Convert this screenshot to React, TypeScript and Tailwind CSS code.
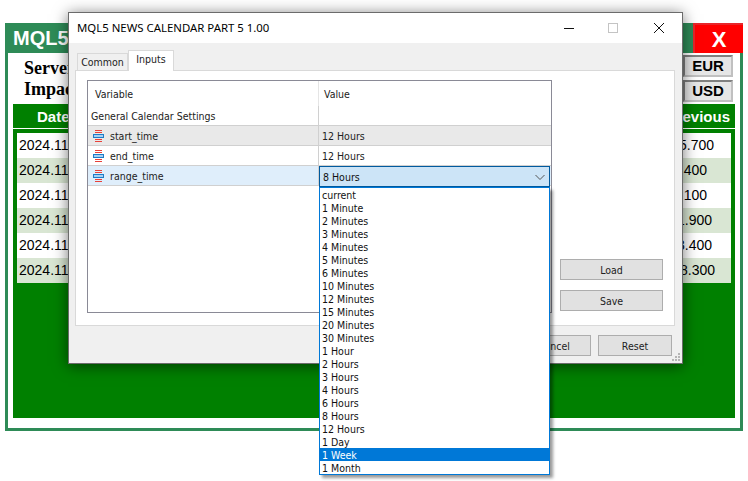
const dialogFont = { fontFamily: '"DejaVu Sans Condensed", "Noto Sans", sans-serif' }

const rows = [
  { value: '5.700', shade: false, inset: 'pr-[17px]' },
  { value: '400', shade: true, inset: 'pr-[24px]' },
  { value: '100', shade: false, inset: 'pr-[24px]' },
  { value: '1.900', shade: true, inset: 'pr-[19px]' },
  { value: '3.400', shade: false, inset: 'pr-[19px]' },
  { value: '8.300', shade: true, inset: 'pr-[16px]' },
]

const ranges = [
  'current', '1 Minute', '2 Minutes', '3 Minutes', '4 Minutes', '5 Minutes', '6 Minutes',
  '10 Minutes', '12 Minutes', '15 Minutes', '20 Minutes', '30 Minutes', '1 Hour', '2 Hours',
  '3 Hours', '4 Hours', '6 Hours', '8 Hours', '12 Hours', '1 Day', '1 Week', '1 Month',
]

function InputIcon() {
  return (
    <svg width="11" height="12" viewBox="0 0 11 12" className="shrink-0">
      <rect x="2" y="0" width="7" height="1" fill="#e8413a" />
      <rect x="2" y="2" width="7" height="1" fill="#e8413a" />
      <rect x="0" y="4" width="11" height="4" fill="#1c7cc8" />
      <rect x="1" y="5" width="9" height="2" fill="#a8d0f0" />
      <rect x="2" y="9" width="7" height="1" fill="#e8413a" />
      <rect x="2" y="11" width="7" height="1" fill="#e8413a" />
    </svg>
  )
}

function Bevel({ label }: { label: string }) {
  return (
    <div className="w-[50px] h-[22px] flex items-center justify-center bg-[#e6e6e6] border-2 border-t-[#808080] border-l-[#808080] border-r-[#c0c0c0] border-b-[#c0c0c0] text-[15px] font-bold text-black">
      {label}
    </div>
  )
}

function Btn({ label, className }: { label: string; className: string }) {
  return (
    <div className={`h-[21px] flex items-center justify-center pt-[2px] bg-[#e1e1e1] border border-[#adadad] text-[10.5px] text-[#222] ${className}`}>
      {label}
    </div>
  )
}

function ParamRow({ name, value, className }: { name: string; value: string; className: string }) {
  return (
    <div className={`flex h-[20px] border-b border-[#d0d0d0] ${className}`}>
      <div className="w-[231px] flex items-center gap-[6px] pl-[5px] border-r border-[#d0d0d0]">
        <InputIcon />
        <span className="pt-[2px]">{name}</span>
      </div>
      <div className="pl-[3px] pt-[2px] flex items-center">{value}</div>
    </div>
  )
}

export default function App() {
  return (
    <div className="relative w-[748px] h-[481px] overflow-hidden bg-white pt-[23px] pl-[5px]" style={{ fontFamily: '"Liberation Sans", Arial, sans-serif' }}>
      <div className="w-[738px] h-[408px] border-[3px] border-t-0 border-[#2e8b57] flex flex-col">
        <div className="h-[30px] -mx-[3px] bg-[#2e8b57] flex items-center justify-between shrink-0">
          <span className="pl-[8px] text-[20px] font-bold text-white">MQL5</span>
          <div className="w-[50px] h-[30px] bg-[#ff0000] border-l-2 border-t-2 border-[#e8262a] flex items-center justify-center text-[22px] font-bold text-white">X</div>
        </div>
        <div className="flex-1 flex flex-col px-[5px] pb-[10px]">
          <div className="h-[51px] flex justify-between pt-[2px] pr-[2px] shrink-0">
            <div className="pl-[11px] pt-[3px] text-[18px] font-bold text-black leading-[21px]" style={{ fontFamily: '"Liberation Serif", serif' }}>
              <div>Server</div>
              <div>Impact</div>
            </div>
            <div className="flex flex-col gap-[3px]">
              <Bevel label="EUR" />
              <Bevel label="USD" />
            </div>
          </div>
          <div className="flex-1 bg-[#008000]">
            <div className="h-[25px] flex justify-between items-center pl-[24px] pr-[5px] pt-[2px] border-b border-white text-[15px] font-bold text-white">
              <span>Date</span>
              <span>Previous</span>
            </div>
            <div className="mx-[4px] mt-[4px] bg-white">
              {rows.map((r, i) => (
                <div key={i} className={`h-[25px] flex items-center justify-between pl-[2px] text-[14px] text-black ${r.inset} ${r.shade ? 'bg-[#d9e6d3]' : 'bg-white'}`}>
                  <span>2024.11</span>
                  <span>{r.value}</span>
                </div>
              ))}
            </div>
          </div>
        </div>
      </div>

      {/* settings dialog */}
      <div className="absolute left-[68px] top-[12px] w-[615px] h-[352px] bg-[#f0f0f0] border border-[#6b6b6b] shadow-[0_2px_14px_rgba(0,0,0,0.55)] flex flex-col text-[10.5px] text-[#222]" style={dialogFont}>
        <div className="h-[30px] bg-white flex items-center pl-[8px] shrink-0">
          <span className="flex-1 text-[11.4px] text-black" style={{ fontFamily: '"Noto Sans", sans-serif' }}>MQL5 NEWS CALENDAR PART 5 1.00</span>
          <svg width="12" height="12" viewBox="0 0 12 12" className="mr-[33px]"><path d="M1 6.5h10" stroke="#111" /></svg>
          <div className="w-[10px] h-[10px] border border-[#c4c4c4] mr-[35px]" />
          <svg width="12" height="12" viewBox="0 0 12 12" className="mr-[17px]"><path d="M1 1l10 10M11 1L1 11" stroke="#111" /></svg>
        </div>

        <div className="flex-1 flex flex-col px-[6px] relative">
          <div className="flex items-end h-[27px] pl-[2px] shrink-0">
            <div className="w-[51px] h-[17px] pt-px bg-[#f0f0f0] border border-b-0 border-[#d9d9d9] flex items-center justify-center">Common</div>
            <div className="w-[46px] h-[21px] -mb-px relative bg-white border border-b-0 border-[#d9d9d9] flex items-center justify-center pb-[2px]">Inputs</div>
          </div>
          <div className="w-[600px] h-[256px] bg-white border border-[#d9d9d9] pt-[9px] pl-[11px] flex gap-[8px]">
            <div className="w-[465px] h-[233px] border border-[#8a8a96]">
              <div className="flex h-[25px]">
                <div className="w-[231px] pl-[7px] pt-[2px] flex items-center border-r border-[#e5e5e5]">Variable</div>
                <div className="pl-[5px] pt-[2px] flex items-center">Value</div>
              </div>
              <div className="flex h-[20px] border-b border-[#d0d0d0]">
                <div className="w-[231px] pl-[3px] pt-[2px] flex items-center border-r border-[#d0d0d0]">General Calendar Settings</div>
              </div>
              <ParamRow name="start_time" value="12 Hours" className="bg-[#e9e9e9]" />
              <ParamRow name="end_time" value="12 Hours" className="bg-white" />
              <ParamRow name="range_time" value="" className="bg-[#dfeefb]" />
            </div>
            <div className="flex flex-col gap-[10px] pt-[179px]">
              <Btn label="Load" className="w-[103px]" />
              <Btn label="Save" className="w-[103px]" />
            </div>
          </div>
          <div className="flex justify-end gap-[7px] pr-[4px] pt-[9px]">
            <Btn label="Cancel" className="w-[74px]" />
            <Btn label="Reset" className="w-[74px]" />
          </div>
          <svg width="10" height="10" viewBox="0 0 10 10" className="absolute right-[1px] bottom-[1px]" fill="#b5b5b5">
            <rect x="7" y="1" width="2" height="2" />
            <rect x="4" y="4" width="2" height="2" />
            <rect x="7" y="4" width="2" height="2" />
            <rect x="1" y="7" width="2" height="2" />
            <rect x="4" y="7" width="2" height="2" />
            <rect x="7" y="7" width="2" height="2" />
          </svg>
        </div>
      </div>

      {/* open combo box over the dialog */}
      <div className="absolute left-[319px] top-[166px] w-[231px] text-[10.5px] text-[#111]" style={dialogFont}>
        <div className="h-[21px] bg-[#cce4f7] border border-[#005a9e] flex items-center justify-between pl-[3px] pr-[3px]">
          <span className="pt-[2px]">8 Hours</span>
          <svg width="12" height="12" viewBox="0 0 12 12"><path d="M1.5 4l4.5 4.5L10.5 4" fill="none" stroke="#555" /></svg>
        </div>
        <div className="bg-white border border-[#0078d7] shadow-[3px_3px_3px_rgba(0,0,0,0.4)]">
          {ranges.map((r) => (
            <div key={r} className={`h-[13px] leading-[15px] pl-[2px] ${r === '1 Week' ? 'bg-[#0078d7] text-white' : ''}`}>{r}</div>
          ))}
        </div>
      </div>
    </div>
  )
}
